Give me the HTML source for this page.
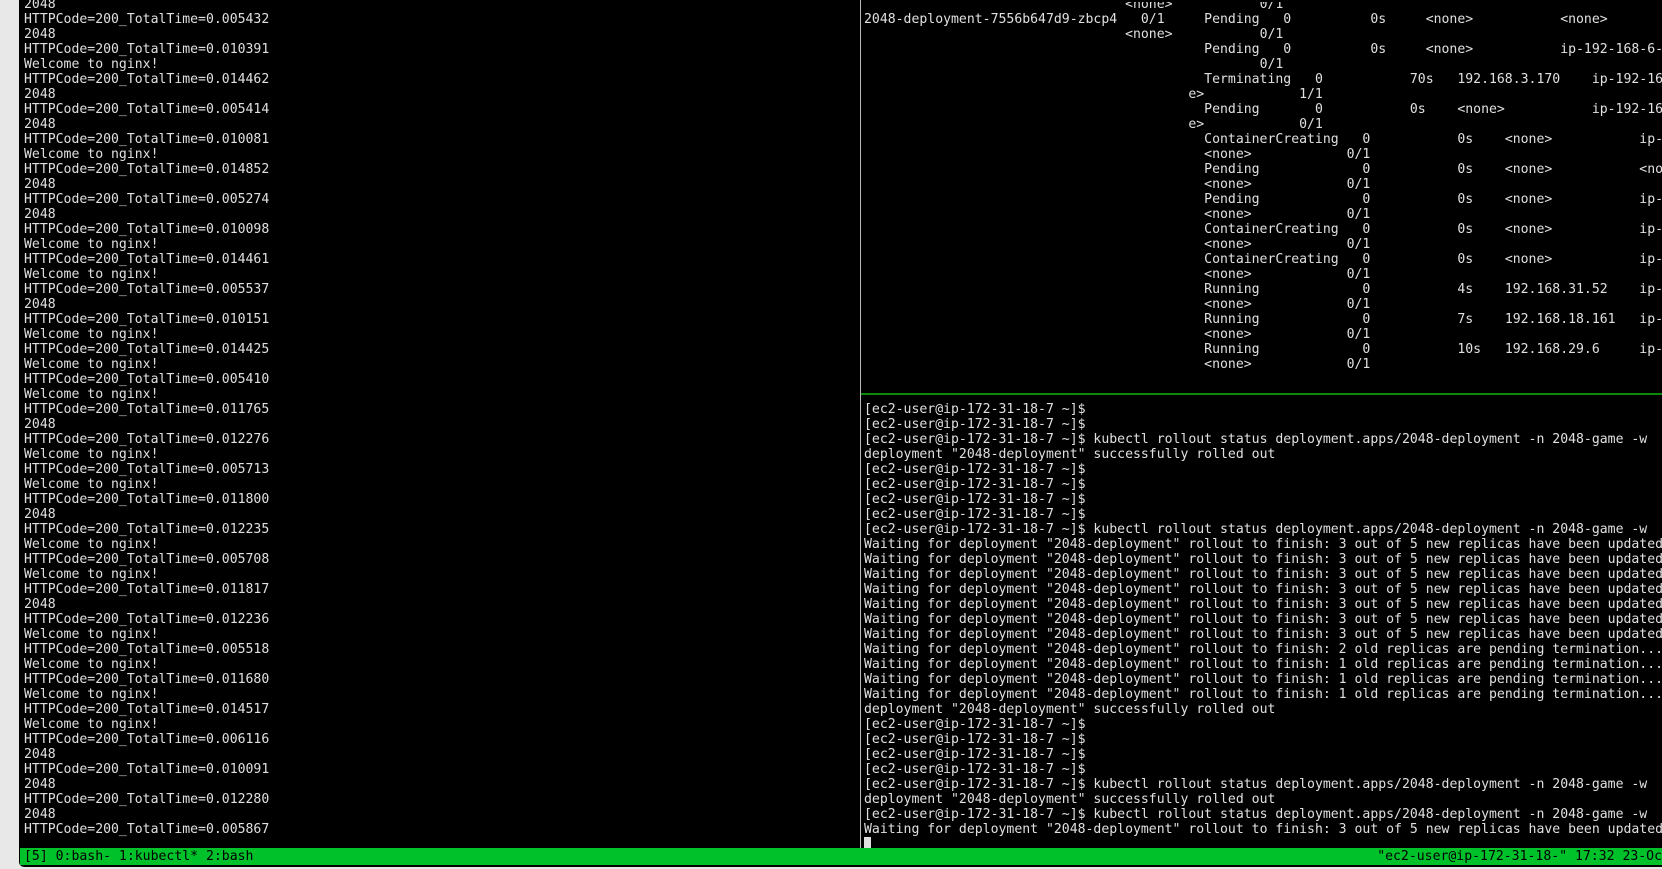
<!DOCTYPE html>
<html><head><meta charset="utf-8"><style>
html,body{margin:0;padding:0}
body{width:1662px;height:869px;overflow:hidden;background:#e8e8e8;position:relative}
#term{position:absolute;left:19px;top:0;width:1643px;height:867px;background:#000;border-bottom-left-radius:5px;overflow:hidden}
.t{font-family:"DejaVu Sans Mono","Liberation Mono",monospace;font-size:13.15px;line-height:15px;color:#e0e0e0;white-space:pre}
.r{position:absolute;height:15px}
.r span{position:absolute;top:0}
#left{position:absolute;left:5px;top:-3px}
#vdiv{position:absolute;left:841px;top:0;width:1px;height:848px;background:#bbb}
#hdiv{position:absolute;left:842px;top:393px;width:801px;height:2px;background:#0a8a0a}
#rt{position:absolute;left:845px;top:2px;width:798px;height:390px;overflow:hidden}
#rb{position:absolute;left:845px;top:-3px}
#status{position:absolute;left:1px;top:848px;width:1642px;height:17px;background:#00c12a;color:#000}
#status .l{position:absolute;left:4px;top:1px}
#status .rr{position:absolute;right:0;top:1px}
.cur{display:inline-block;width:7px;height:14px;background:#e0e0e0;vertical-align:top}
</style></head><body>
<div id="term">
<div id="left" class="t">2048
HTTPCode=200_TotalTime=0.005432
2048
HTTPCode=200_TotalTime=0.010391
Welcome to nginx!
HTTPCode=200_TotalTime=0.014462
2048
HTTPCode=200_TotalTime=0.005414
2048
HTTPCode=200_TotalTime=0.010081
Welcome to nginx!
HTTPCode=200_TotalTime=0.014852
2048
HTTPCode=200_TotalTime=0.005274
2048
HTTPCode=200_TotalTime=0.010098
Welcome to nginx!
HTTPCode=200_TotalTime=0.014461
Welcome to nginx!
HTTPCode=200_TotalTime=0.005537
2048
HTTPCode=200_TotalTime=0.010151
Welcome to nginx!
HTTPCode=200_TotalTime=0.014425
Welcome to nginx!
HTTPCode=200_TotalTime=0.005410
Welcome to nginx!
HTTPCode=200_TotalTime=0.011765
2048
HTTPCode=200_TotalTime=0.012276
Welcome to nginx!
HTTPCode=200_TotalTime=0.005713
Welcome to nginx!
HTTPCode=200_TotalTime=0.011800
2048
HTTPCode=200_TotalTime=0.012235
Welcome to nginx!
HTTPCode=200_TotalTime=0.005708
Welcome to nginx!
HTTPCode=200_TotalTime=0.011817
2048
HTTPCode=200_TotalTime=0.012236
Welcome to nginx!
HTTPCode=200_TotalTime=0.005518
Welcome to nginx!
HTTPCode=200_TotalTime=0.011680
Welcome to nginx!
HTTPCode=200_TotalTime=0.014517
Welcome to nginx!
HTTPCode=200_TotalTime=0.006116
2048
HTTPCode=200_TotalTime=0.010091
2048
HTTPCode=200_TotalTime=0.012280
2048
HTTPCode=200_TotalTime=0.005867</div>
<div id="vdiv"></div>
<div id="rt" class="t">
<div class="r" style="top:-5px"><span style="left:33ch">&lt;none&gt;</span><span style="left:50ch">0/1</span></div>
<div class="r" style="top:10px"><span style="left:0">2048-deployment-7556b647d9-zbcp4</span><span style="left:35ch">0/1</span><span style="left:43ch">Pending</span><span style="left:53ch">0</span><span style="left:64ch">0s</span><span style="left:71ch">&lt;none&gt;</span><span style="left:88ch">&lt;none&gt;</span></div>
<div class="r" style="top:25px"><span style="left:33ch">&lt;none&gt;</span><span style="left:50ch">0/1</span></div>
<div class="r" style="top:40px"><span style="left:43ch">Pending</span><span style="left:53ch">0</span><span style="left:64ch">0s</span><span style="left:71ch">&lt;none&gt;</span><span style="left:88ch">ip-192-168-6-</span></div>
<div class="r" style="top:55px"><span style="left:50ch">0/1</span></div>
<div class="r" style="top:70px"><span style="left:43ch">Terminating</span><span style="left:57ch">0</span><span style="left:69ch">70s</span><span style="left:75ch">192.168.3.170</span><span style="left:92ch">ip-192-16</span></div>
<div class="r" style="top:85px"><span style="left:41ch">e&gt;</span><span style="left:55ch">1/1</span></div>
<div class="r" style="top:100px"><span style="left:43ch">Pending</span><span style="left:57ch">0</span><span style="left:69ch">0s</span><span style="left:75ch">&lt;none&gt;</span><span style="left:92ch">ip-192-16</span></div>
<div class="r" style="top:115px"><span style="left:41ch">e&gt;</span><span style="left:55ch">0/1</span></div>
<div class="r" style="top:130px"><span style="left:43ch">ContainerCreating</span><span style="left:63ch">0</span><span style="left:75ch">0s</span><span style="left:81ch">&lt;none&gt;</span><span style="left:98ch">ip-</span></div>
<div class="r" style="top:145px"><span style="left:43ch">&lt;none&gt;</span><span style="left:61ch">0/1</span></div>
<div class="r" style="top:160px"><span style="left:43ch">Pending</span><span style="left:63ch">0</span><span style="left:75ch">0s</span><span style="left:81ch">&lt;none&gt;</span><span style="left:98ch">&lt;no</span></div>
<div class="r" style="top:175px"><span style="left:43ch">&lt;none&gt;</span><span style="left:61ch">0/1</span></div>
<div class="r" style="top:190px"><span style="left:43ch">Pending</span><span style="left:63ch">0</span><span style="left:75ch">0s</span><span style="left:81ch">&lt;none&gt;</span><span style="left:98ch">ip-</span></div>
<div class="r" style="top:205px"><span style="left:43ch">&lt;none&gt;</span><span style="left:61ch">0/1</span></div>
<div class="r" style="top:220px"><span style="left:43ch">ContainerCreating</span><span style="left:63ch">0</span><span style="left:75ch">0s</span><span style="left:81ch">&lt;none&gt;</span><span style="left:98ch">ip-</span></div>
<div class="r" style="top:235px"><span style="left:43ch">&lt;none&gt;</span><span style="left:61ch">0/1</span></div>
<div class="r" style="top:250px"><span style="left:43ch">ContainerCreating</span><span style="left:63ch">0</span><span style="left:75ch">0s</span><span style="left:81ch">&lt;none&gt;</span><span style="left:98ch">ip-</span></div>
<div class="r" style="top:265px"><span style="left:43ch">&lt;none&gt;</span><span style="left:61ch">0/1</span></div>
<div class="r" style="top:280px"><span style="left:43ch">Running</span><span style="left:63ch">0</span><span style="left:75ch">4s</span><span style="left:81ch">192.168.31.52</span><span style="left:98ch">ip-</span></div>
<div class="r" style="top:295px"><span style="left:43ch">&lt;none&gt;</span><span style="left:61ch">0/1</span></div>
<div class="r" style="top:310px"><span style="left:43ch">Running</span><span style="left:63ch">0</span><span style="left:75ch">7s</span><span style="left:81ch">192.168.18.161</span><span style="left:98ch">ip-</span></div>
<div class="r" style="top:325px"><span style="left:43ch">&lt;none&gt;</span><span style="left:61ch">0/1</span></div>
<div class="r" style="top:340px"><span style="left:43ch">Running</span><span style="left:63ch">0</span><span style="left:75ch">10s</span><span style="left:81ch">192.168.29.6</span><span style="left:98ch">ip-</span></div>
<div class="r" style="top:355px"><span style="left:43ch">&lt;none&gt;</span><span style="left:61ch">0/1</span></div>
</div>
<div id="hdiv"></div>
<div id="rb" class="t"><div style="height:405px"></div>[ec2-user@ip-172-31-18-7 ~]$
[ec2-user@ip-172-31-18-7 ~]$
[ec2-user@ip-172-31-18-7 ~]$ kubectl rollout status deployment.apps/2048-deployment -n 2048-game -w
deployment "2048-deployment" successfully rolled out
[ec2-user@ip-172-31-18-7 ~]$
[ec2-user@ip-172-31-18-7 ~]$
[ec2-user@ip-172-31-18-7 ~]$
[ec2-user@ip-172-31-18-7 ~]$
[ec2-user@ip-172-31-18-7 ~]$ kubectl rollout status deployment.apps/2048-deployment -n 2048-game -w
Waiting for deployment "2048-deployment" rollout to finish: 3 out of 5 new replicas have been updated...
Waiting for deployment "2048-deployment" rollout to finish: 3 out of 5 new replicas have been updated...
Waiting for deployment "2048-deployment" rollout to finish: 3 out of 5 new replicas have been updated...
Waiting for deployment "2048-deployment" rollout to finish: 3 out of 5 new replicas have been updated...
Waiting for deployment "2048-deployment" rollout to finish: 3 out of 5 new replicas have been updated...
Waiting for deployment "2048-deployment" rollout to finish: 3 out of 5 new replicas have been updated...
Waiting for deployment "2048-deployment" rollout to finish: 3 out of 5 new replicas have been updated...
Waiting for deployment "2048-deployment" rollout to finish: 2 old replicas are pending termination...
Waiting for deployment "2048-deployment" rollout to finish: 1 old replicas are pending termination...
Waiting for deployment "2048-deployment" rollout to finish: 1 old replicas are pending termination...
Waiting for deployment "2048-deployment" rollout to finish: 1 old replicas are pending termination...
deployment "2048-deployment" successfully rolled out
[ec2-user@ip-172-31-18-7 ~]$
[ec2-user@ip-172-31-18-7 ~]$
[ec2-user@ip-172-31-18-7 ~]$
[ec2-user@ip-172-31-18-7 ~]$
[ec2-user@ip-172-31-18-7 ~]$ kubectl rollout status deployment.apps/2048-deployment -n 2048-game -w
deployment "2048-deployment" successfully rolled out
[ec2-user@ip-172-31-18-7 ~]$ kubectl rollout status deployment.apps/2048-deployment -n 2048-game -w
Waiting for deployment "2048-deployment" rollout to finish: 3 out of 5 new replicas have been updated...
<span class="cur"></span></div>
<div id="status" class="t"><span class="l">[5] 0:bash- 1:kubectl* 2:bash</span><span class="rr">"ec2-user@ip-172-31-18-" 17:32 23-Oc</span></div>
</div>
</body></html>
